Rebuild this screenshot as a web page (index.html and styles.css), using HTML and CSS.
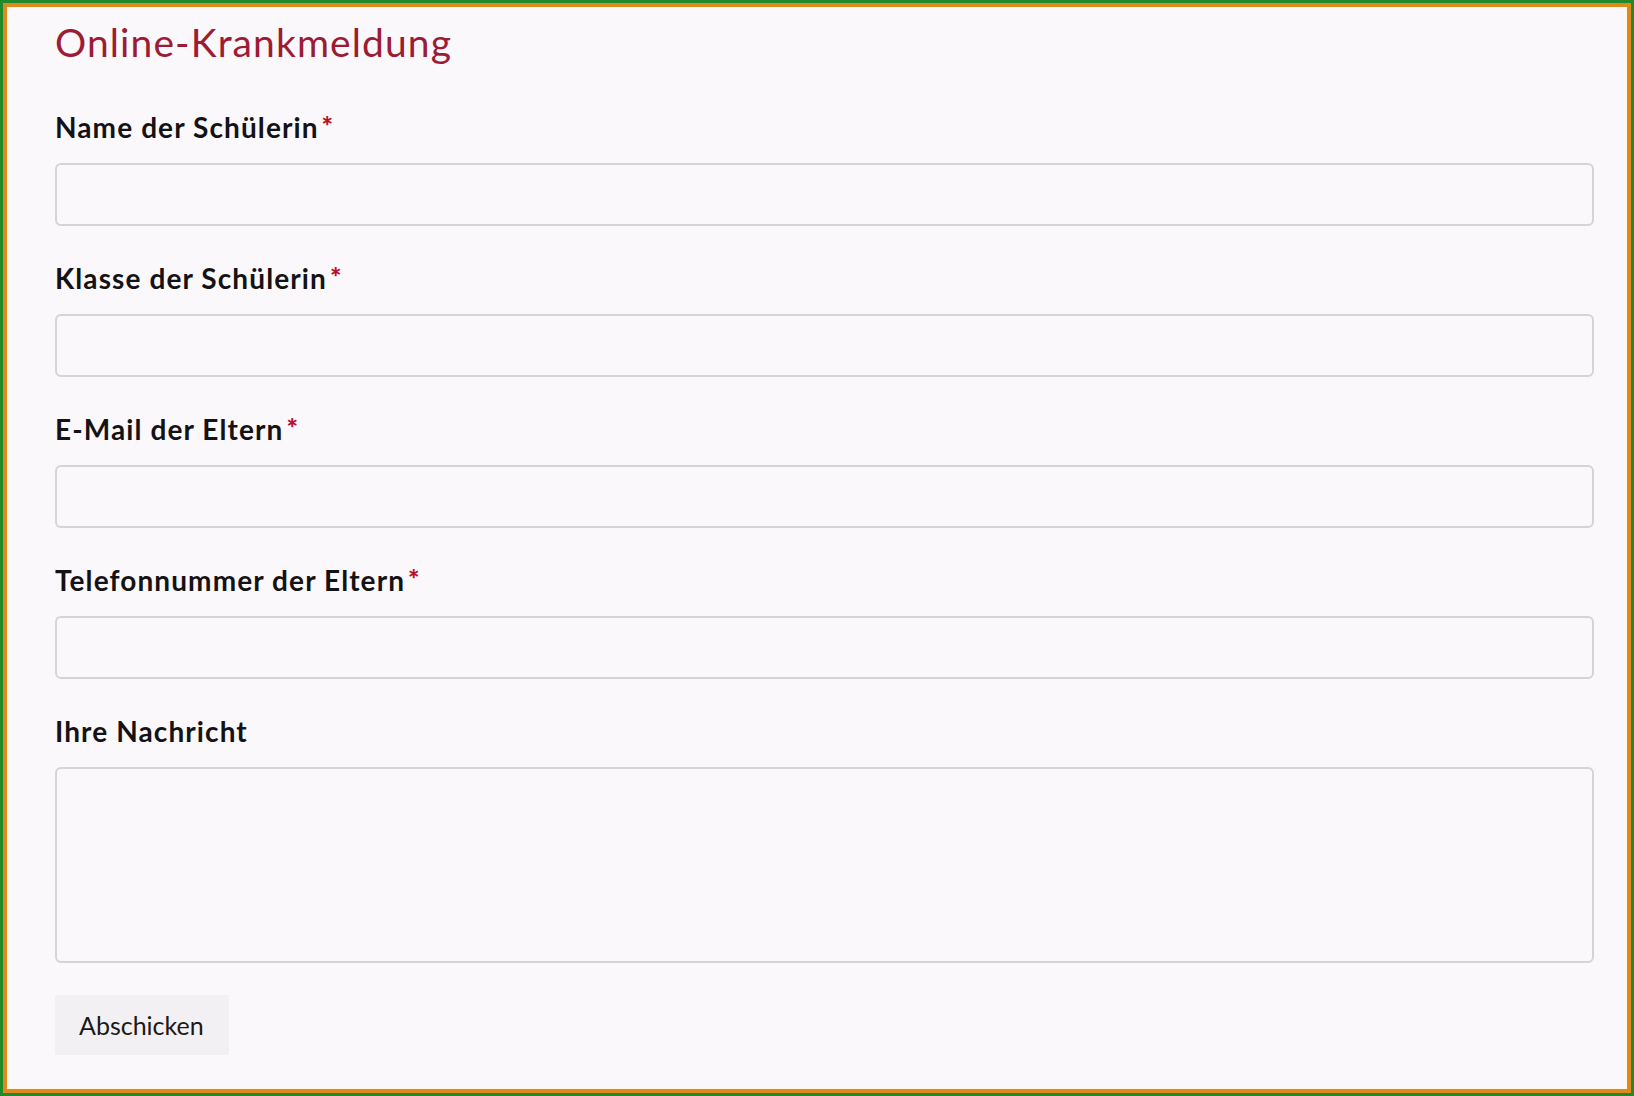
FILE: index.html
```html
<!DOCTYPE html>
<html lang="de">
<head>
<meta charset="utf-8">
<title>Online-Krankmeldung</title>
<link rel="stylesheet" href="styles.css">
</head>
<body>
<div class="frame">
  <div class="frame-inner">
    <form class="form">
      <h1 class="title">Online-Krankmeldung</h1>
      <div class="field">
        <label class="label">Name der Schülerin<span class="req">*</span></label>
        <input class="input" type="text">
      </div>
      <div class="field">
        <label class="label">Klasse der Schülerin<span class="req">*</span></label>
        <input class="input" type="text">
      </div>
      <div class="field">
        <label class="label">E-Mail der Eltern<span class="req">*</span></label>
        <input class="input" type="text">
      </div>
      <div class="field">
        <label class="label">Telefonnummer der Eltern<span class="req">*</span></label>
        <input class="input" type="text">
      </div>
      <div class="field">
        <label class="label">Ihre Nachricht</label>
        <textarea class="input textarea"></textarea>
      </div>
      <button class="button" type="button">Abschicken</button>
    </form>
  </div>
</div>
</body>
</html>
```
FILE: styles.css
```css
html, body {
  margin: 0;
  padding: 0;
}
body {
  background: #fbf8fb;
  font-family: Lato, "Liberation Sans", sans-serif;
}
.frame {
  box-sizing: border-box;
  height: 100vh;
  border: 3px solid #1f8a2a;
}
.frame-inner {
  box-sizing: border-box;
  height: 100%;
  border: 4px solid #e08a1e;
  box-shadow: inset 0 0 0 1px #fdf7e6;
  background: #fbf8fb;
}
.form {
  display: flex;
  flex-direction: column;
  padding: 0 33px 0 48px;
}
.title {
  margin: 11px 0 0;
  font-size: 39px;
  line-height: 48px;
  font-weight: 400;
  color: #9b1c34;
  letter-spacing: 1.1px;
}
.field {
  display: flex;
  flex-direction: column;
  margin-top: 44px;
}
.field + .field {
  margin-top: 35px;
}
.label {
  font-size: 28px;
  line-height: 34px;
  font-weight: 700;
  color: #141214;
  margin-bottom: 19px;
  letter-spacing: 1.1px;
}
.req {
  display: inline-block;
  color: #b8102c;
  font-size: 27px;
  font-weight: 900;
  line-height: 26px;
  vertical-align: top;
  padding-top: 3px;
  margin-left: 3px;
  letter-spacing: 0;
}
.input {
  box-sizing: border-box;
  height: 63px;
  border: 2px solid #d6d3d6;
  border-radius: 6px;
  background: #fbf8fb;
  font-family: inherit;
  font-size: 22px;
  padding: 0 12px;
}
.textarea {
  height: 196px;
  resize: none;
}
.button {
  align-self: flex-start;
  margin-top: 32px;
  width: 174px;
  height: 60px;
  border: none;
  border-radius: 2px;
  background: #f3f0f3;
  font-family: inherit;
  font-size: 25px;
  color: #1a181a;
  text-align: left;
  padding: 0 0 0 24px;
}
```
